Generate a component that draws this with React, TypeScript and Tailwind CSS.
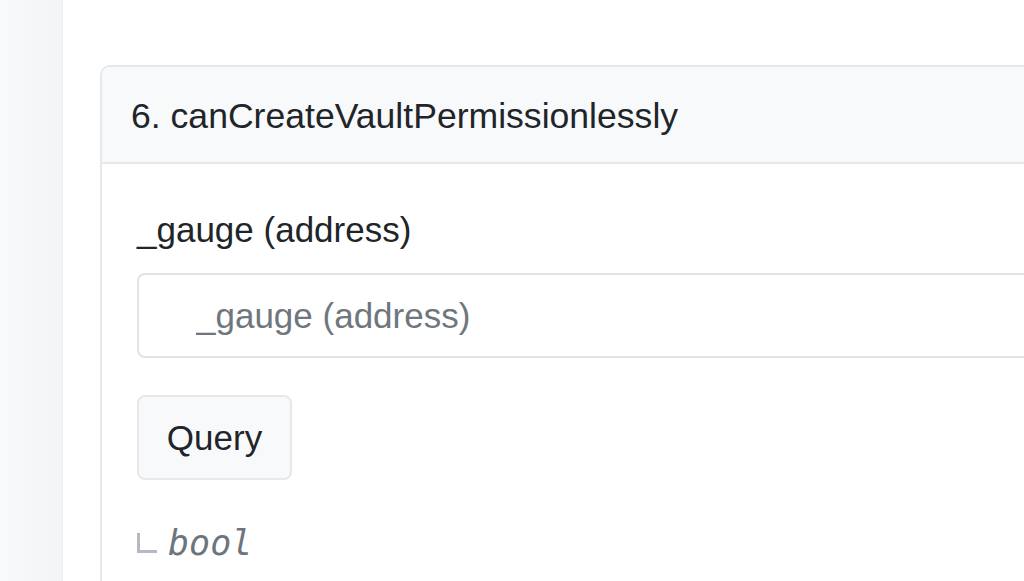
import React from "react";

const sans = { fontFamily: '"Liberation Sans", Arial, Helvetica, sans-serif' };

export default function App() {
  return (
    <div
      className="flex h-[581px] w-[1024px] overflow-hidden bg-white text-[#212529]"
      style={sans}
    >
      <div className="w-[63px] shrink-0 border-r border-[#eceef2] bg-gradient-to-r from-[#f9fafb] to-[#f3f4f7]" />
      <div className="flex-1 overflow-hidden pl-[37px] pt-[65px]">
        <div className="w-[1000px] rounded-tl-[10px] border-2 border-[#e6e8eb]">
          <div className="flex h-[97px] items-center rounded-tl-[8px] border-b-2 border-[#e6e8eb] bg-[#f8f9fa] px-[29px] pt-[3px]">
            <span className="text-[35.6px] leading-[42px]">
              6. canCreateVaultPermissionlessly
            </span>
          </div>
          <div className="pl-[35px] pt-[45px] pb-[40px]">
            <label className="block text-[35px] leading-[42px]">
              _gauge (address)
            </label>
            <input
              type="text"
              placeholder="_gauge (address)"
              className="mt-[22px] block h-[85px] w-[960px] rounded-[8px] border-2 border-[#e0e3e7] bg-white pl-[57px] text-[35px] leading-[42px] outline-none placeholder:text-[#6f767d]"
              style={sans}
            />
            <button
              className="mt-[37px] flex h-[85px] w-[155px] items-center justify-center rounded-[8px] border-2 border-[#e6e8eb] bg-[#f8f9fa] text-[35px] leading-[42px] text-[#212529]"
              style={sans}
            >
              Query
            </button>
            <div className="mt-[42px] flex items-center">
              <span className="mr-[11px] inline-block h-[20px] w-[20px] border-b-[3px] border-l-[3px] border-[#b4bac2]" />
              <span
                className="text-[35px] italic leading-[42px] text-[#6c757d]"
                style={{ fontFamily: '"DejaVu Sans Mono", "Liberation Mono", monospace' }}
              >
                bool
              </span>
            </div>
          </div>
        </div>
      </div>
    </div>
  );
}
